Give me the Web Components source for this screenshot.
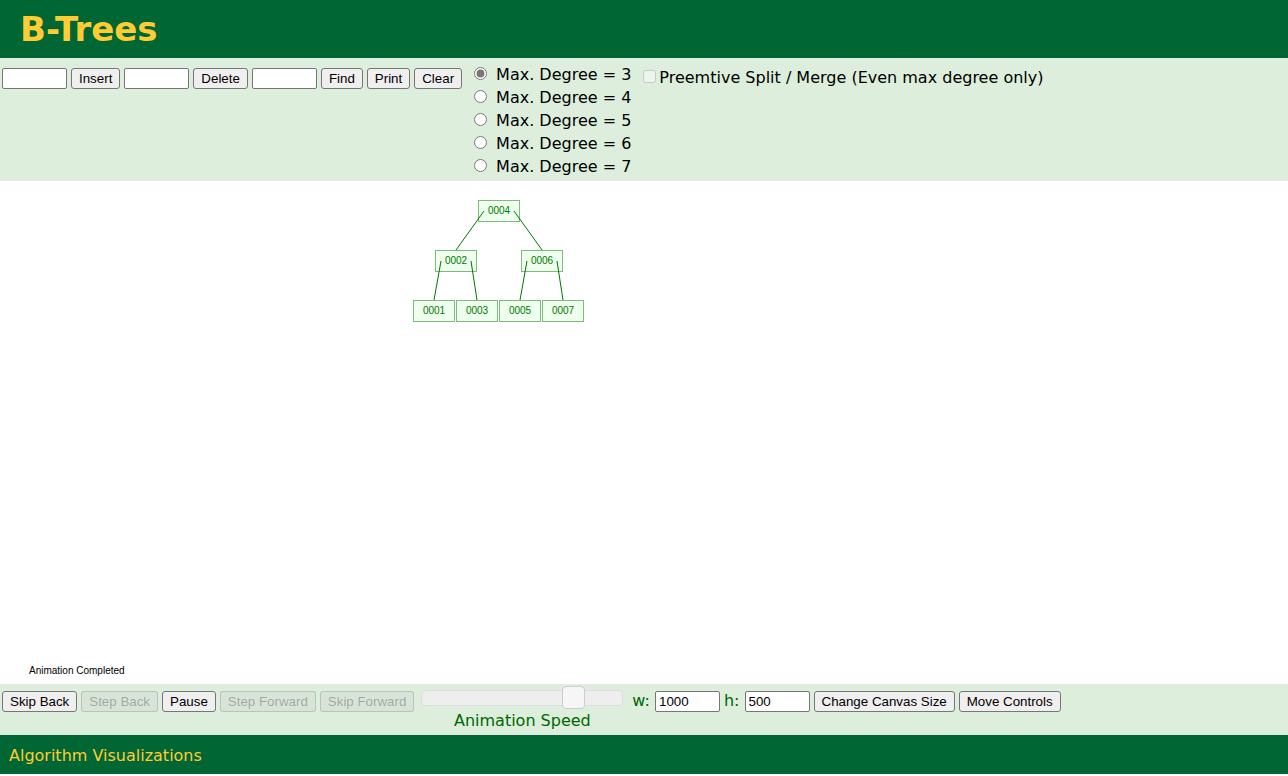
<!DOCTYPE html>
<html lang="en">
<head>
  <meta charset="utf-8">
  <meta name="viewport" content="width=device-width, initial-scale=1">
  <title>B-Tree Visualization</title>
  <style>
    body {
      margin: 0;
      background: #fff;
      font-family: Verdana, "DejaVu Sans", sans-serif;
      font-size: 16px;
      --bar: #ddeedd;
      --dark: #006633;
      --gold: #ffcc33;
    }
  </style>
</head>
<body>
  <page-header>B-Trees</page-header>
  <main>
    <tree-controls></tree-controls>
    <tree-canvas status="Animation Completed"></tree-canvas>
    <animation-controls></animation-controls>
  </main>
  <page-footer href="#">Algorithm Visualizations</page-footer>

  <script>
    // button and text box look, shared by both control bars
    const controlStyles = `
      * {
        box-sizing: border-box;
      }
      :host {
        display: flex;
        align-items: flex-start;
        background: var(--bar);
      }
      .row {
        display: flex;
        gap: 4px;
      }
      button, input[type=text] {
        height: 21px;
        margin: 0;
        border: 1px solid #767676;
        border-radius: 3px;
        font-family: Arial, "Liberation Sans", sans-serif;
        color: #000;
      }
      button {
        padding: 0 7px;
        background: #efefef;
        white-space: nowrap;
      }
      button:disabled {
        color: rgba(16, 16, 16, 0.3);
        border-color: rgba(118, 118, 118, 0.3);
        background: rgba(205, 205, 205, 0.3);
      }
      input[type=text] {
        width: 65px;
        padding: 0 3px;
        border-radius: 2px;
        background: #fff;
      }
    `;

    class PageHeader extends HTMLElement {
      constructor() {
        super();
        this.attachShadow({mode: 'open'});
        this.shadowRoot.innerHTML = `
          <style>
            :host {
              display: block;
              padding: 9px 20px;
              background: var(--dark);
              color: var(--gold);
            }
            h1 {
              margin: 0;
              font-size: 34px;
              line-height: 40px;
            }
          </style>
          <h1><slot></slot></h1>
        `;
      }
    }

    class TreeControls extends HTMLElement {
      constructor() {
        super();
        this.attachShadow({mode: 'open'});
      }

      connectedCallback() {
        const degrees = [3, 4, 5, 6, 7];
        this.shadowRoot.innerHTML = `
          <style>
            ${controlStyles}
            :host {
              padding: 5px 2px 3px;
            }
            .row {
              padding-top: 5px;
            }
            .degrees {
              margin-left: 12px;
            }
            label {
              display: flex;
              align-items: center;
              line-height: 23px;
              white-space: nowrap;
            }
            .degrees label {
              gap: 9px;
            }
            .degrees input, .split input {
              width: 13px;
              height: 13px;
              margin: 0 0 2px;
              accent-color: #767676;
            }
            .split {
              gap: 3px;
              margin-left: 12px;
              padding-top: 3px;
            }
          </style>
          <div class="row">
            <input type="text" aria-label="Value to insert">
            <button>Insert</button>
            <input type="text" aria-label="Value to delete">
            <button>Delete</button>
            <input type="text" aria-label="Value to find">
            <button>Find</button>
            <button>Print</button>
            <button>Clear</button>
          </div>
          <div class="degrees" role="radiogroup" aria-label="Max. Degree">
            ${degrees.map(d => `
              <label><input type="radio" name="degree" value="${d}" ${d === 3 ? 'checked' : ''}>Max. Degree = ${d}</label>
            `).join('')}
          </div>
          <label class="split"><input type="checkbox" disabled>Preemtive Split / Merge (Even max degree only)</label>
        `;
      }
    }

    class TreeCanvas extends HTMLElement {
      constructor() {
        super();
        this.attachShadow({mode: 'open'});
        // centre of each node
        this.nodes = [
          {key: '0004', x: 499, y: 30},
          {key: '0002', x: 456, y: 80},
          {key: '0006', x: 542, y: 80},
          {key: '0001', x: 434, y: 130},
          {key: '0003', x: 477, y: 130},
          {key: '0005', x: 520, y: 130},
          {key: '0007', x: 563, y: 130}
        ];
        // parent, child, side
        this.edges = [[0, 1, -1], [0, 2, 1], [1, 3, -1], [1, 4, 1], [2, 5, -1], [2, 6, 1]];
      }

      connectedCallback() {
        const boxes = this.nodes.map(n => `
          <rect x="${n.x - 20.5}" y="${n.y - 10.5}" width="41" height="21"/>
          <text x="${n.x}" y="${n.y + 3}">${n.key}</text>
        `).join('');
        const lines = this.edges.map(([p, c, side]) => {
          const from = this.nodes[p];
          const to = this.nodes[c];
          return `<line x1="${from.x + side * 15}" y1="${from.y}" x2="${to.x}" y2="${to.y - 11}"/>`;
        }).join('');

        this.shadowRoot.innerHTML = `
          <style>
            :host {
              display: block;
              padding-bottom: 3px;
              overflow: hidden;
            }
            svg {
              display: block;
              font-family: Arial, "Liberation Sans", sans-serif;
              font-size: 10px;
            }
            rect {
              fill: #eeffee;
              stroke: #7fbb7f;
            }
            text {
              fill: #007700;
              text-anchor: middle;
            }
            line {
              stroke: #007700;
            }
            .status {
              fill: #000;
              text-anchor: start;
            }
          </style>
          <svg width="1000" height="500">
            ${boxes}
            ${lines}
            <text class="status" x="29" y="493">${this.getAttribute('status')}</text>
          </svg>
        `;
      }
    }

    class AnimationControls extends HTMLElement {
      constructor() {
        super();
        this.attachShadow({mode: 'open'});
        this.shadowRoot.innerHTML = `
          <style>
            ${controlStyles}
            :host {
              padding: 2px 2px 3px;
              color: #006600;
            }
            .row {
              padding-top: 5px;
            }
            .row label {
              padding-right: 1px;
              line-height: 20px;
            }
            .speed {
              display: flex;
              flex-direction: column;
              align-items: center;
              margin: 0 9px 0 7px;
            }
            .speed label {
              line-height: 22px;
            }
            input[type=range] {
              appearance: none;
              width: 202px;
              height: 24px;
              margin: 0;
              background: none;
            }
            input[type=range]::-webkit-slider-runnable-track {
              height: 16px;
              border: 1px solid #dddddd;
              border-radius: 4px;
              background: #eeeeee;
            }
            input[type=range]::-webkit-slider-thumb {
              appearance: none;
              width: 23px;
              height: 23px;
              margin-top: -5px;
              border: 1px solid #cccccc;
              border-radius: 4px;
              background: #f6f6f6;
            }
          </style>
          <div class="row">
            <button>Skip Back</button>
            <button disabled>Step Back</button>
            <button>Pause</button>
            <button disabled>Step Forward</button>
            <button disabled>Skip Forward</button>
          </div>
          <div class="speed">
            <input type="range" id="speed" min="0" max="100" value="79">
            <label for="speed">Animation Speed</label>
          </div>
          <div class="row">
            <label for="width">w:</label>
            <input type="text" id="width" value="1000">
            <label for="height">h:</label>
            <input type="text" id="height" value="500">
            <button>Change Canvas Size</button>
            <button>Move Controls</button>
          </div>
        `;
      }
    }

    class PageFooter extends HTMLElement {
      constructor() {
        super();
        this.attachShadow({mode: 'open'});
      }

      connectedCallback() {
        this.shadowRoot.innerHTML = `
          <style>
            :host {
              display: block;
              padding: 11px 9px 8px;
              background: var(--dark);
              line-height: 20px;
            }
            a {
              color: var(--gold);
              text-decoration: none;
            }
          </style>
          <a href="${this.getAttribute('href')}"><slot></slot></a>
        `;
      }
    }

    customElements.define('page-header', PageHeader);
    customElements.define('tree-controls', TreeControls);
    customElements.define('tree-canvas', TreeCanvas);
    customElements.define('animation-controls', AnimationControls);
    customElements.define('page-footer', PageFooter);
  </script>
</body>
</html>
